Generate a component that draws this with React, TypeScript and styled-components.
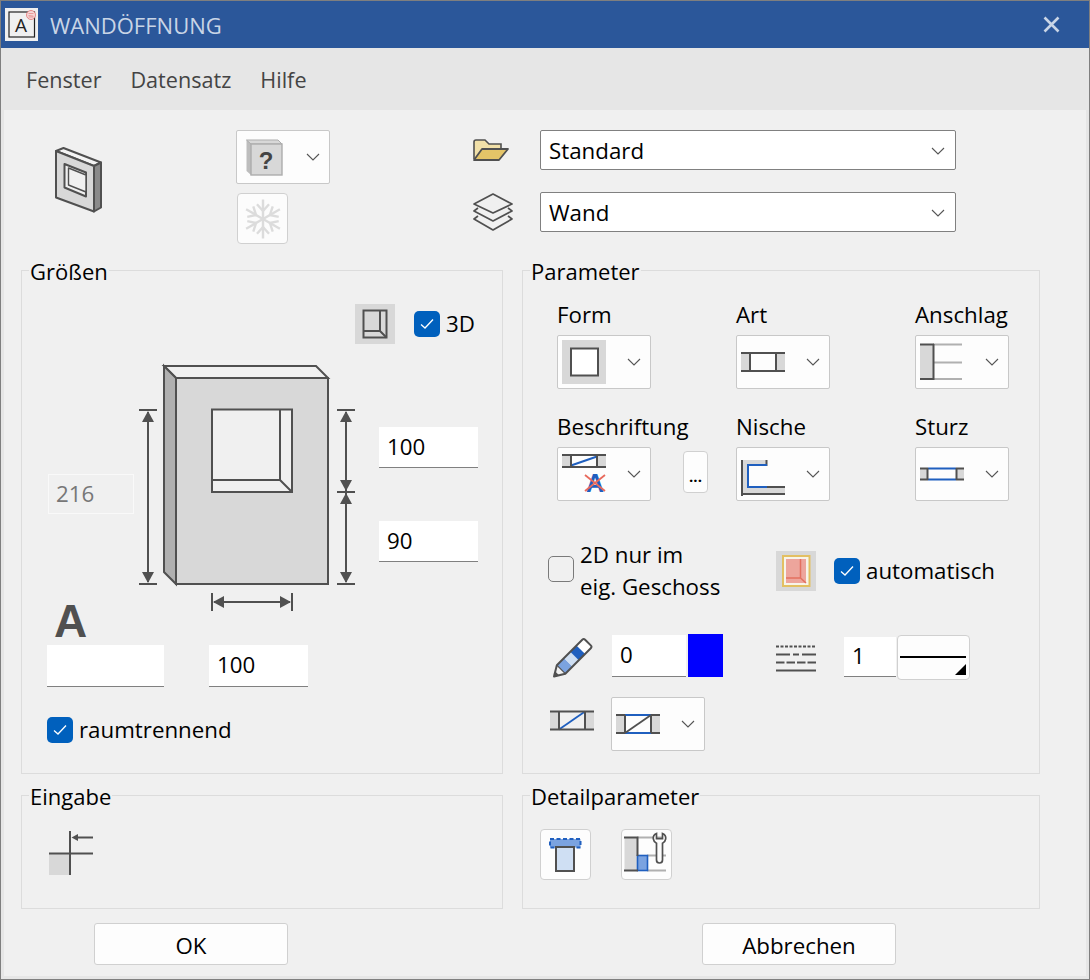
import styled, { createGlobalStyle } from "styled-components";

const INK = "#505050";
const GRAY = "#d8d8d8";
const BLUE = "#1f5fbf";
const MIDBLUE = "#7ba3e0";
const LIGHTBLUE = "#cfdff3";

const GlobalStyle = createGlobalStyle`
    html, body {
        margin: 0;
        padding: 0;
        background: #f0f0f0;
    }
    * {
        box-sizing: border-box;
    }
`;

const Window = styled.div`
    width: 1090px;
    height: 980px;
    display: flex;
    flex-direction: column;
    border: 1px solid #7f7f7f;
    background: #f0f0f0;
    color: #000;
    font-family: "Open Sans", "Noto Sans", sans-serif;
    font-size: 22.3px;
    overflow: hidden;
`;

const TitleBar = styled.div`
    height: 47px;
    flex: none;
    display: flex;
    align-items: center;
    padding: 0 29px 0 4px;
    background: #2b579a;
    color: #c9d5e6;
    font-size: 22px;
`;

const TitleText = styled.span`
    margin: 0 0 0 12px;
    flex: 1;
`;

const MenuBar = styled.div`
    height: 62px;
    flex: none;
    display: flex;
    align-items: center;
    gap: 29px;
    padding: 1px 0 0 25px;
    background: #e6e6e6;
    color: #444;
    font-size: 21.6px;
`;

const Body = styled.div`
    flex: 1;
    min-height: 0;
    border-left: 3px solid #e6e6e6;
    border-right: 3px solid #e6e6e6;
    border-bottom: 3px solid #e6e6e6;
`;

const TopArea = styled.div`
    height: 145px;
    display: flex;
    align-items: flex-start;
    padding-left: 51px;
`;

const AppIconWrap = styled.div`
    margin-top: 37px;
    width: 47px;
    flex: none;
`;

const PresetColumn = styled.div`
    margin-left: 134px;
    padding-top: 20px;
    width: 94px;
    flex: none;
`;

const SnowButton = styled.button`
    display: flex;
    align-items: center;
    justify-content: center;
    width: 51px;
    height: 51px;
    margin: 9px 0 0 1px;
    padding: 0;
    border: 1px solid #d0d0d0;
    border-radius: 4px;
    background: #fcfcfc;
`;

const SelectGrid = styled.div`
    margin-left: 142px;
    padding-top: 20px;
    display: grid;
    grid-template-columns: 68px 416px;
    grid-auto-rows: 40px;
    row-gap: 22px;
    align-items: center;
`;

const Select = styled.div`
    height: 40px;
    display: flex;
    align-items: center;
    justify-content: space-between;
    padding: 1px 10px 0 8px;
    border: 1px solid #808080;
    border-radius: 2px;
    background: #fff;
`;

const Groups = styled.div`
    display: grid;
    grid-template-columns: 482px 518px;
    grid-template-rows: 519px 129px;
    column-gap: 19px;
    row-gap: 6px;
    padding-left: 17px;
`;

const Group = styled.fieldset`
    margin: 0;
    padding: 0;
    min-width: 0;
    border: 1px solid #dcdcdc;
`;

const Legend = styled.legend`
    height: 30px;
    margin-left: 7px;
    padding: 0 1px;
    font-size: 22px;
    line-height: 32px;
`;

const SizeTop = styled.div`
    display: flex;
    align-items: center;
    gap: 19px;
    margin-top: 19px;
    padding-left: 333px;
`;

const DiagramRow = styled.div`
    height: 253px;
    margin-top: 18px;
    display: flex;
    padding-left: 26px;
`;

const LeftColumn = styled.div`
    width: 86px;
    flex: none;
    margin-right: 1px;
    padding-top: 112px;
`;

const BigA = styled.div`
    margin: 87px 0 0 6px;
    height: 40px;
    font-family: "Liberation Sans", sans-serif;
    font-weight: 700;
    font-size: 46px;
    line-height: 40px;
    color: ${INK};
`;

const RightColumn = styled.div`
    display: flex;
    flex-direction: column;
    gap: 53px;
    margin-left: 19px;
    padding-top: 65px;
`;

const Field = styled.input<{ $w: number; $h?: number }>`
    width: ${(p) => p.$w}px;
    height: ${(p) => p.$h ?? 41}px;
    flex: none;
    padding: 0 0 2px 8px;
    border: none;
    border-bottom: 1px solid #808080;
    border-radius: 0;
    outline: none;
    background: #fff;
    color: #000;
    font: inherit;
`;

const DisabledField = styled(Field)`
    border: 1px solid #f9f9f9;
    padding-left: 7px;
    background: transparent;
    color: #777;
`;

const SizeBottom = styled.div`
    display: flex;
    gap: 45px;
    margin-top: 30px;
    padding-left: 25px;
`;

const CheckRow = styled.label`
    display: flex;
    align-items: center;
    gap: 6px;
    line-height: 26px;
`;

const RoomRow = styled.div`
    margin-top: 30px;
    padding-left: 25px;
`;

const Box = styled.span<{ $checked?: boolean }>`
    display: flex;
    align-items: center;
    justify-content: center;
    width: 26px;
    height: 26px;
    flex: none;
    border-radius: 5px;
    border: ${(p) => (p.$checked ? "none" : "1.5px solid #7a7a7a")};
    background: ${(p) => (p.$checked ? "#0060bd" : "transparent")};
`;

const ComboGrid = styled.div`
    display: grid;
    grid-template-columns: 179px 179px 94px;
    row-gap: 23px;
    margin-top: 15px;
    padding-left: 34px;
`;

const ComboLabel = styled.div`
    height: 30px;
    margin-bottom: 5px;
    line-height: 30px;
    white-space: nowrap;
`;

const ComboLine = styled.div`
    display: flex;
    align-items: flex-start;
`;

const ComboBox = styled.div`
    width: 94px;
    height: 54px;
    flex: none;
    display: flex;
    align-items: center;
    justify-content: space-between;
    padding: 0 9px 0 4px;
    border: 1px solid #c8c8c8;
    border-radius: 2px;
    background: #fdfdfd;
`;

const DotsButton = styled.button`
    width: 25px;
    height: 42px;
    margin: 4px 0 0 32px;
    padding: 8px 0 0;
    flex: none;
    border: 1px solid #d0d0d0;
    border-radius: 4px;
    background: #fdfdfd;
    color: #000;
    font: inherit;
    font-size: 15px;
    font-weight: 700;
    line-height: 20px;
`;

const OptionRow = styled.div`
    display: flex;
    align-items: flex-start;
    margin-top: 38px;
    padding-left: 25px;
`;

const FloorOption = styled.div`
    width: 228px;
    flex: none;
    display: flex;
    align-items: flex-start;
    gap: 6px;
    line-height: 32px;
`;

const FloorBox = styled.div`
    margin-top: 17px;
`;

const AutoIcon = styled.div`
    margin-top: 12px;
    flex: none;
    height: 40px;
`;

const AutoCheck = styled.div`
    margin: 19px 0 0 18px;
`;

const PenRow = styled.div`
    display: flex;
    align-items: flex-start;
    height: 46px;
    margin-top: 31px;
    padding-left: 30px;
`;

const PenSlot = styled.div<{ $top: number; $left?: number }>`
    flex: none;
    margin-top: ${(p) => p.$top}px;
    margin-left: ${(p) => p.$left ?? 0}px;
`;

const ColorSwatch = styled.div`
    width: 35px;
    height: 43px;
    background: #0000ff;
`;

const LineButton = styled.button`
    position: relative;
    width: 73px;
    height: 45px;
    padding: 0;
    border: 1px solid #d0d0d0;
    border-radius: 4px;
    background: #fdfdfd;
    &::before {
        content: "";
        position: absolute;
        left: 2px;
        right: 3px;
        top: 20px;
        height: 2px;
        background: #000;
    }
    &::after {
        content: "";
        position: absolute;
        right: 3px;
        bottom: 4px;
        border-left: 11px solid transparent;
        border-bottom: 11px solid #000;
    }
`;

const HatchRow = styled.div`
    display: flex;
    align-items: flex-start;
    gap: 17px;
    margin-top: 17px;
    padding-left: 27px;
`;

const HatchIcon = styled.div`
    margin-top: 13px;
    flex: none;
`;

const InputIconWrap = styled.div`
    padding: 20px 0 0 26px;
`;

const DetailRow = styled.div`
    display: flex;
    gap: 30px;
    padding: 19px 0 0 17px;
`;

const ToolButton = styled.button`
    width: 51px;
    height: 51px;
    padding: 0;
    display: flex;
    border: 1px solid #d0d0d0;
    border-radius: 4px;
    background: #fdfdfd;
`;

const Footer = styled.div`
    display: flex;
    gap: 414px;
    margin-top: 14px;
    padding-left: 90px;
`;

const FooterButton = styled.button`
    width: 194px;
    height: 42px;
    padding: 3px 0 0;
    border: 1px solid #d0d0d0;
    border-radius: 3px;
    background: #fdfdfd;
    color: #000;
    font: inherit;
`;

function Chevron() {
    return (
        <svg width="14" height="8" viewBox="0 0 14 8" style={{ flex: "none" }}>
            <polyline points="1,1 7,7 13,1" fill="none" stroke="#555" strokeWidth="1.1" />
        </svg>
    );
}

function CheckBox({ checked }: { checked?: boolean }) {
    return (
        <Box $checked={checked}>
            {checked && (
                <svg width="14" height="12" viewBox="0 0 14 12">
                    <polyline points="1,6.5 5,10 13,1.5" fill="none" stroke="#fff" strokeWidth="1.3" />
                </svg>
            )}
        </Box>
    );
}

function WindowIcon() {
    return (
        <svg width="33" height="33" viewBox="5 8 33 33" style={{ flex: "none" }}>
            <rect x="5" y="8" width="33" height="33" fill="#f0f0f0" />
            <rect x="9" y="12" width="25.5" height="25" fill="#f0f0f0" stroke="#222" strokeWidth="1.2" />
            <text x="21" y="32" textAnchor="middle" fontFamily="Open Sans, sans-serif" fontSize="19" fill="#222">A</text>
            <circle cx="31" cy="15" r="4.5" fill="#f4d8d8" stroke="#e57f7f" strokeWidth="0.9" />
            <path d="M28.5 13.5h5M28.5 15.5l5 .6M28.5 17h5" stroke="#e57f7f" strokeWidth="0.7" fill="none" />
        </svg>
    );
}

function CloseIcon() {
    return (
        <svg width="17" height="17" viewBox="0 0 17 17" style={{ flex: "none" }}>
            <path d="M1.500 1.500l14 14M15.500 1.500l-14 14" stroke="#c9d5e6" strokeWidth="2.6" />
        </svg>
    );
}

function OpeningIcon() {
    return (
        <svg width="47" height="66" viewBox="55 147 47 66" style={{ display: "block" }}>
            <g stroke={INK} strokeWidth="2" strokeLinejoin="round">
                <polygon points="56,151 63.5,148 101,162.5 94,166" fill="#f4f4f4" />
                <polygon points="94,166 101,162.5 101,207.5 94,211.5" fill="#8a8a8a" />
                <polygon points="56,151 94,166 94,211.5 56,197.5" fill={GRAY} />
                <polygon points="64.5,164 86,172.5 86,196.5 64.5,187.5" fill="#f0f0f0" />
                <polygon points="68.5,168 86,175 86,192 68.5,185" fill="#f0f0f0" strokeWidth="1.4" />
            </g>
        </svg>
    );
}

function UnknownIcon() {
    return (
        <svg width="44" height="44" viewBox="240 135 44 44" style={{ flex: "none" }}>
            <polygon points="245.5,140 277,140 281,144 281,175 250,175 245.5,171" fill="#bdbdbd" />
            <polygon points="245.5,140 277,140 281,144 250,144" fill={GRAY} stroke="#adadad" strokeWidth="1" />
            <rect x="250" y="144" width="31" height="31" fill={GRAY} stroke="#adadad" strokeWidth="1.4" />
            <text x="265" y="169" textAnchor="middle" fontFamily="Liberation Sans, sans-serif" fontWeight="700" fontSize="24" fill="#444">?</text>
        </svg>
    );
}

function SnowIcon() {
    const arms = [0, 60, 120, 180, 240, 300];
    return (
        <svg width="40" height="40" viewBox="-20 -20 40 40">
            {arms.map((a) => (
                <g key={a} transform={`rotate(${a})`} stroke="#dcdcdc" strokeWidth="2.4" fill="none">
                    <path d="M0 0V-19.500" />
                    <path d="M-6 -14.700L0 -8L6 -14.700" />
                </g>
            ))}
        </svg>
    );
}

function FolderIcon() {
    return (
        <svg width="38" height="24" viewBox="473 143 38 24">
            <path d="M475 164V147q0-2 2-2h9l4 4h12v5" fill="#f1e0a8" stroke={INK} strokeWidth="1.6" />
            <path d="M475 165l8-11h26l-9 11z" fill="#e4c468" stroke={INK} strokeWidth="1.8" strokeLinejoin="round" />
        </svg>
    );
}

function LayersIcon() {
    return (
        <svg width="42" height="40" viewBox="471 197 42 40">
            <g fill="none" stroke={INK} strokeWidth="1.7" strokeLinejoin="round">
                <polygon points="492,199 511,209 492,218 473,209" />
                <path d="M477 213l-4 3 19 10 19-10-4-3" />
                <path d="M477 221l-4 3 19 11 19-11-4-3" />
            </g>
        </svg>
    );
}

function ViewIcon() {
    return (
        <svg width="40" height="40" viewBox="355 304 40 40" style={{ flex: "none" }}>
            <rect x="355" y="304" width="40" height="40" fill={GRAY} />
            <g fill="none" stroke={INK} strokeWidth="2">
                <rect x="363.5" y="310.5" width="23" height="27" />
                <path d="M380 310.500V331H363.5M380 331l6.5 6.5" />
            </g>
        </svg>
    );
}

function WallDiagram() {
    return (
        <svg width="225" height="253" viewBox="135 362 225 253" style={{ flex: "none", display: "block" }}>
            <g stroke={INK} strokeWidth="2" strokeLinejoin="miter">
                <polygon points="164,366 316,366 328,378 176,378" fill="#f0f0f0" />
                <polygon points="164,366 176,378 176,584 164,572" fill="#b0b0b0" />
                <rect x="176" y="378" width="152" height="206" fill={GRAY} />
                <rect x="212" y="409.5" width="80" height="82.5" fill="#f0f0f0" />
                <path d="M280 409.5V480H212M280 480l12 12" fill="none" />
            </g>
            <g stroke={INK} strokeWidth="2" fill="none">
                <path d="M139 410H157M139 584H157M148 412V582" />
                <path d="M337 410H355M337 492H355M337 584H355M346 412V582" />
                <path d="M212 593V611M292 593V611M214 602H290" />
            </g>
            <g fill={INK}>
                <polygon points="148,411 142,422 154,422" />
                <polygon points="148,583 142,572 154,572" />
                <polygon points="346,411 340,422 352,422" />
                <polygon points="346,491 340,480 352,480" />
                <polygon points="346,493 340,504 352,504" />
                <polygon points="346,583 340,572 352,572" />
                <polygon points="213,602 224,596 224,608" />
                <polygon points="291,602 280,596 280,608" />
            </g>
        </svg>
    );
}

function ShapeIcon() {
    return (
        <svg width="44" height="44" viewBox="562 340 44 44" style={{ flex: "none" }}>
            <rect x="562" y="340" width="44" height="44" fill={GRAY} />
            <rect x="571" y="348.500" width="27" height="27" fill="#fff" stroke={INK} strokeWidth="2" />
        </svg>
    );
}

function KindIcon() {
    return (
        <svg width="44" height="44" viewBox="741 340 44 44" style={{ flex: "none" }}>
            <rect x="741" y="353" width="9" height="18" fill={GRAY} />
            <rect x="776" y="353" width="9" height="18" fill={GRAY} />
            <path d="M741 353H785M741 371H785M750 353V371M776 353V371" stroke={INK} strokeWidth="2" fill="none" />
        </svg>
    );
}

function StopIcon() {
    return (
        <svg width="44" height="44" viewBox="920 340 44 44" style={{ flex: "none" }}>
            <rect x="920" y="344" width="13" height="35" fill={GRAY} />
            <path d="M933 344.5H962M933 362.5H962M933 379H962" stroke="#b0b0b0" strokeWidth="2" fill="none" />
            <path d="M920 344.5H934M920 379H934M933.5 344V380" stroke={INK} strokeWidth="2" fill="none" />
        </svg>
    );
}

function LabelIcon() {
    return (
        <svg width="44" height="44" viewBox="562 452 44 44" style={{ flex: "none" }}>
            <rect x="562" y="455" width="9" height="12" fill={GRAY} />
            <rect x="597" y="455" width="9" height="12" fill={GRAY} />
            <path d="M571 465.5L597 456.5" stroke={BLUE} strokeWidth="2" fill="none" />
            <path d="M562 455H606M562 467H606M571 455V467M597 455V467" stroke={INK} strokeWidth="2" fill="none" />
            <text x="595" y="492" textAnchor="middle" fontFamily="Liberation Sans, sans-serif" fontWeight="700" fontSize="25" fill={BLUE}>A</text>
            <path d="M585 475L605 491M605 475L585 491" stroke="#e8695c" strokeWidth="1.8" fill="none" />
        </svg>
    );
}

function NicheIcon() {
    return (
        <svg width="44" height="44" viewBox="741 452 44 44" style={{ flex: "none" }}>
            <polygon points="741,460 767,460 767,465 748,465 748,487 785,487 785,495 741,495" fill={GRAY} />
            <path d="M742 460V496M741 494H785M767 487H785M766.5 460V466" stroke={INK} strokeWidth="2" fill="none" />
            <path d="M767 465H748V487H767" stroke={BLUE} strokeWidth="2" fill="none" />
        </svg>
    );
}

function LintelIcon() {
    return (
        <svg width="44" height="44" viewBox="920 452 44 44" style={{ flex: "none" }}>
            <rect x="920" y="468" width="8" height="12" fill={GRAY} />
            <rect x="956" y="468" width="8" height="12" fill={GRAY} />
            <path d="M928 468.5H956M928 479.5H956" stroke={BLUE} strokeWidth="2" fill="none" />
            <path d="M920 468.5H928M956 468.5H964M920 479.5H928M956 479.5H964M927.5 468V480M956.5 468V480" stroke={INK} strokeWidth="2" fill="none" />
        </svg>
    );
}

function FloorIcon() {
    return (
        <svg width="40" height="40" viewBox="776 551 40 40" style={{ display: "block" }}>
            <rect x="776" y="551" width="40" height="40" fill={GRAY} />
            <rect x="783" y="556" width="26.5" height="30" fill="#f7f4ea" stroke="#e3c062" strokeWidth="2" />
            <rect x="786" y="559" width="20" height="24" fill="#eda59c" />
            <path d="M800.5 559V578H786M800.5 578l5.5 5" stroke="#e3705f" strokeWidth="1.5" fill="none" />
        </svg>
    );
}

function PenIcon() {
    return (
        <svg width="40" height="42" viewBox="553 637 40 42" style={{ display: "block" }}>
            <g transform="translate(554 676.5) rotate(-45)">
                <rect x="10" y="-6" width="10" height="12" fill={MIDBLUE} />
                <rect x="20" y="-6" width="9" height="12" fill={LIGHTBLUE} />
                <rect x="29" y="-6" width="9" height="12" fill={BLUE} />
                <rect x="38" y="-6" width="10" height="12" fill="#fff" />
                <path d="M0 0L10 -6H46q2 0 2 2V4q0 2 -2 2H10z" fill="none" stroke={INK} strokeWidth="2" strokeLinejoin="round" />
                <path d="M3 -2V2" stroke={INK} strokeWidth="3" />
                <path d="M10 -6V6" stroke={INK} strokeWidth="1.2" />
            </g>
        </svg>
    );
}

function LineTypesIcon() {
    return (
        <svg width="40" height="27" viewBox="776 645 40 27" style={{ display: "block" }}>
            <g fill="none" stroke={INK} strokeWidth="2">
                <path d="M776 646.5H816" strokeDasharray="3 1.5" />
                <path d="M776 654.5H816" strokeDasharray="14 3 6 3 14" />
                <path d="M776 662.5H816" strokeDasharray="8.5 2" />
                <path d="M776 670.5H816" />
            </g>
        </svg>
    );
}

function HatchIconPlain() {
    return (
        <svg width="44" height="21" viewBox="550 710.5 44 21" style={{ display: "block" }}>
            <rect x="550" y="712" width="9" height="18" fill={GRAY} />
            <rect x="585" y="712" width="9" height="18" fill={GRAY} />
            <path d="M559 730L585 712" stroke={BLUE} strokeWidth="1.8" fill="none" />
            <path d="M550 712H594M550 730H594M559 712V730M585 712V730" stroke={INK} strokeWidth="2" fill="none" />
        </svg>
    );
}

function HatchIconCombo() {
    return (
        <svg width="44" height="44" viewBox="616 702 44 44" style={{ flex: "none" }}>
            <rect x="616" y="715" width="9" height="18" fill={GRAY} />
            <rect x="651" y="715" width="9" height="18" fill={GRAY} />
            <path d="M625 715H651M625 733H651" stroke={BLUE} strokeWidth="2" fill="none" />
            <path d="M625 733L651 715" stroke={INK} strokeWidth="1.8" fill="none" />
            <path d="M616 715H625M651 715H660M616 733H625M651 733H660M625 715V733M651 715V733" stroke={INK} strokeWidth="2" fill="none" />
        </svg>
    );
}

function InputIcon() {
    return (
        <svg width="46" height="46" viewBox="48 829 46 46" style={{ display: "block" }}>
            <rect x="49" y="853" width="21" height="21" fill={GRAY} />
            <path d="M70 830V874M49 852.5H93" stroke={INK} strokeWidth="2" fill="none" />
            <path d="M75 836.5H93" stroke={INK} strokeWidth="2" fill="none" />
            <polygon points="71.5,836.5 78,833 78,840" fill={INK} />
        </svg>
    );
}

function LintelDetailIcon() {
    return (
        <svg width="49" height="49" viewBox="541 830 49 49">
            <rect x="550" y="839" width="30.5" height="8.5" fill={MIDBLUE} stroke={BLUE} strokeWidth="2" strokeDasharray="4 2.5" />
            <rect x="556" y="847" width="18" height="24" fill={LIGHTBLUE} stroke={INK} strokeWidth="2" />
        </svg>
    );
}

function WrenchDetailIcon() {
    return (
        <svg width="49" height="49" viewBox="622 830 49 49">
            <rect x="624.5" y="837" width="13" height="34" fill={GRAY} />
            <path d="M637 837.5H666M647 855.5H666M647 870.5H666" stroke="#b0b0b0" strokeWidth="2" fill="none" />
            <rect x="637.5" y="855.5" width="10" height="15" fill={MIDBLUE} stroke={BLUE} strokeWidth="1.6" />
            <path d="M624 837.5H637.5V856M624 870.5H638" stroke={INK} strokeWidth="2" fill="none" />
            <path
                d="M656.5 833.5c-2.5 1-3.5 3-3.2 5.3.3 2 1.4 3.6 3.2 4.4V860c0 1.800 1.200 3 3 3s3-1.200 3-3V843.200c1.800-.8 2.900-2.400 3.200-4.400.3-2.300-.7-4.300-3.200-5.300v5.200h-6z"
                fill="#fdfdfd"
                stroke={INK}
                strokeWidth="1.7"
            />
        </svg>
    );
}

function Combo({ label, icon, extra }: { label: string; icon: React.ReactNode; extra?: React.ReactNode }) {
    return (
        <div>
            <ComboLabel>{label}</ComboLabel>
            <ComboLine>
                <ComboBox>
                    {icon}
                    <Chevron />
                </ComboBox>
                {extra}
            </ComboLine>
        </div>
    );
}

export default function App() {
    return (
        <Window>
            <GlobalStyle />
            <TitleBar>
                <WindowIcon />
                <TitleText>WANDÖFFNUNG</TitleText>
                <CloseIcon />
            </TitleBar>
            <MenuBar>
                <span>Fenster</span>
                <span>Datensatz</span>
                <span>Hilfe</span>
            </MenuBar>
            <Body>
                <TopArea>
                    <AppIconWrap>
                        <OpeningIcon />
                    </AppIconWrap>
                    <PresetColumn>
                        <ComboBox>
                            <UnknownIcon />
                            <Chevron />
                        </ComboBox>
                        <SnowButton>
                            <SnowIcon />
                        </SnowButton>
                    </PresetColumn>
                    <SelectGrid>
                        <FolderIcon />
                        <Select>
                            <span>Standard</span>
                            <Chevron />
                        </Select>
                        <LayersIcon />
                        <Select>
                            <span>Wand</span>
                            <Chevron />
                        </Select>
                    </SelectGrid>
                </TopArea>
                <Groups>
                    <Group>
                        <Legend>Größen</Legend>
                        <SizeTop>
                            <ViewIcon />
                            <CheckRow>
                                <CheckBox checked />
                                3D
                            </CheckRow>
                        </SizeTop>
                        <DiagramRow>
                            <LeftColumn>
                                <DisabledField $w={86} $h={40} value="216" readOnly />
                                <BigA>A</BigA>
                            </LeftColumn>
                            <WallDiagram />
                            <RightColumn>
                                <Field $w={99} value="100" readOnly />
                                <Field $w={99} value="90" readOnly />
                            </RightColumn>
                        </DiagramRow>
                        <SizeBottom>
                            <Field $w={117} $h={42} value="" readOnly />
                            <Field $w={99} $h={42} value="100" readOnly />
                        </SizeBottom>
                        <RoomRow>
                            <CheckRow>
                                <CheckBox checked />
                                raumtrennend
                            </CheckRow>
                        </RoomRow>
                    </Group>
                    <Group>
                        <Legend>Parameter</Legend>
                        <ComboGrid>
                            <Combo label="Form" icon={<ShapeIcon />} />
                            <Combo label="Art" icon={<KindIcon />} />
                            <Combo label="Anschlag" icon={<StopIcon />} />
                            <Combo label="Beschriftung" icon={<LabelIcon />} extra={<DotsButton>...</DotsButton>} />
                            <Combo label="Nische" icon={<NicheIcon />} />
                            <Combo label="Sturz" icon={<LintelIcon />} />
                        </ComboGrid>
                        <OptionRow>
                            <FloorOption>
                                <FloorBox>
                                    <CheckBox />
                                </FloorBox>
                                <span>
                                    2D nur im
                                    <br />
                                    eig. Geschoss
                                </span>
                            </FloorOption>
                            <AutoIcon>
                                <FloorIcon />
                            </AutoIcon>
                            <AutoCheck>
                                <CheckRow>
                                    <CheckBox checked />
                                    automatisch
                                </CheckRow>
                            </AutoCheck>
                        </OptionRow>
                        <PenRow>
                            <PenSlot $top={3}>
                                <PenIcon />
                            </PenSlot>
                            <PenSlot $top={1} $left={19}>
                                <Field $w={74} $h={42} value="0" readOnly />
                            </PenSlot>
                            <PenSlot $top={0} $left={2}>
                                <ColorSwatch />
                            </PenSlot>
                            <PenSlot $top={11} $left={53}>
                                <LineTypesIcon />
                            </PenSlot>
                            <PenSlot $top={3} $left={28}>
                                <Field $w={52} $h={40} value="1" readOnly />
                            </PenSlot>
                            <PenSlot $top={1} $left={1}>
                                <LineButton />
                            </PenSlot>
                        </PenRow>
                        <HatchRow>
                            <HatchIcon>
                                <HatchIconPlain />
                            </HatchIcon>
                            <ComboBox>
                                <HatchIconCombo />
                                <Chevron />
                            </ComboBox>
                        </HatchRow>
                    </Group>
                    <Group>
                        <Legend>Eingabe</Legend>
                        <InputIconWrap>
                            <InputIcon />
                        </InputIconWrap>
                    </Group>
                    <Group>
                        <Legend>Detailparameter</Legend>
                        <DetailRow>
                            <ToolButton>
                                <LintelDetailIcon />
                            </ToolButton>
                            <ToolButton>
                                <WrenchDetailIcon />
                            </ToolButton>
                        </DetailRow>
                    </Group>
                </Groups>
                <Footer>
                    <FooterButton>OK</FooterButton>
                    <FooterButton>Abbrechen</FooterButton>
                </Footer>
            </Body>
        </Window>
    );
}
